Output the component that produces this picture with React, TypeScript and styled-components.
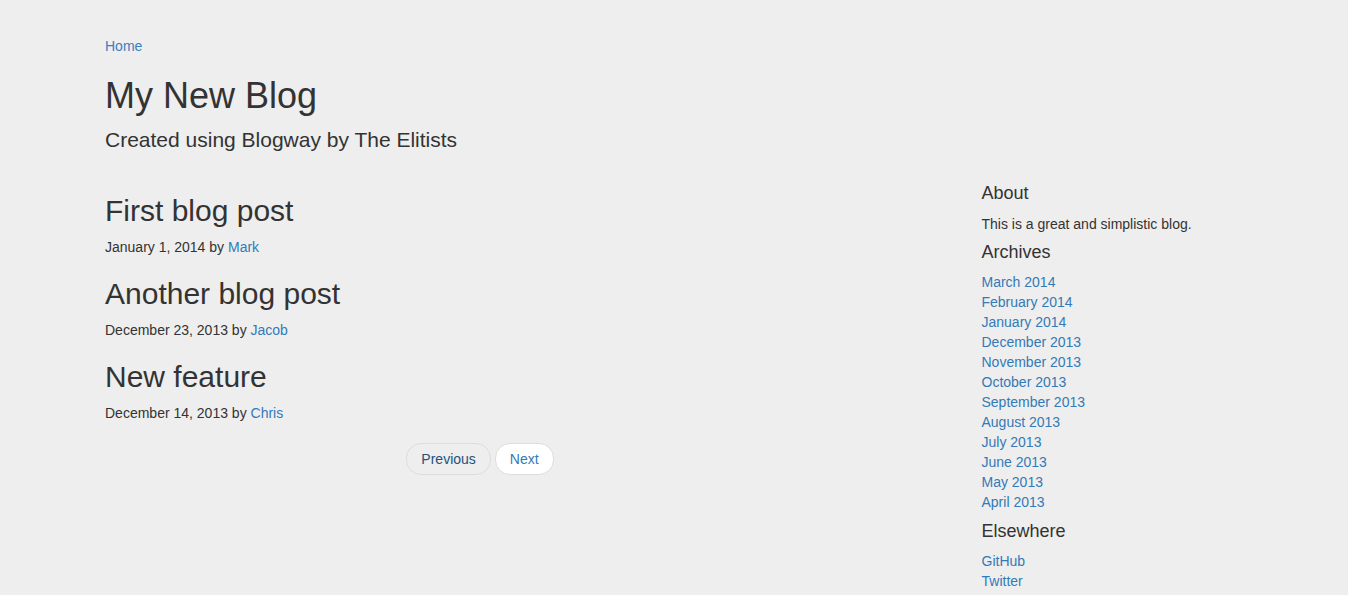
import React from "react";
import styled, { createGlobalStyle } from "styled-components";

const Global = createGlobalStyle`
  html, body { margin: 0; padding: 0; }
  body {
    background: #eeeeee;
    font-family: "Liberation Sans", Arial, Helvetica, sans-serif;
    font-size: 14px;
    line-height: 1.428571;
    color: #333333;
  }
  * { box-sizing: border-box; }
`;

const Container = styled.div`
  width: 1170px;
  margin: 0 auto;
  padding: 0 15px 0 16px;
`;

const Header = styled.header`
  padding-top: 36px;
  padding-bottom: 9px;
`;

const Crumb = styled.a`
  display: block;
  color: #3a80bf;
  text-decoration: none;
  line-height: 20px;
`;

const Title = styled.h1`
  font-size: 36px;
  font-weight: 500;
  line-height: 1.1;
  margin: 20px 0 9px;
`;

const Subtitle = styled.p`
  font-size: 21px;
  line-height: 30px;
  margin: 0 0 10px;
`;

const Row = styled.div`
  display: flex;
  margin: 0 -15px;
`;

const Main = styled.main`
  width: 780px;
  padding: 0 15px;
`;

const Sidebar = styled.aside`
  width: 292.5px;
  margin-left: 96.5px;
  padding: 0 15px;
`;

const PostTitle = styled.h2`
  font-size: 30px;
  font-weight: 500;
  line-height: 1.1;
  margin: 20px 0 10px;
`;

const Meta = styled.p`
  margin: 0 0 10px;
  line-height: 20px;
`;

const Link = styled.a`
  color: #337ab7;
  text-decoration: none;
`;

const Pager = styled.ul`
  list-style: none;
  padding: 0;
  margin: 20px 0;
  display: flex;
  justify-content: center;
  gap: 4px;
`;

const PagerLink = styled.a<{ $hover?: boolean }>`
  display: inline-block;
  padding: 5px 14px;
  line-height: 20px;
  border: 1px solid #dddddd;
  border-radius: 15px;
  text-decoration: none;
  background: ${(p) => (p.$hover ? "#eeeeee" : "#ffffff")};
  color: ${(p) => (p.$hover ? "#23527c" : "#337ab7")};
`;

const SideHeading = styled.h4<{ $mt?: number; $mb?: number }>`
  font-size: 18px;
  font-weight: 500;
  line-height: 1.1;
  margin: ${(p) => p.$mt ?? 10}px 0 ${(p) => p.$mb ?? 10}px;
`;

const SideText = styled.p`
  margin: 0 0 6px;
  line-height: 20px;
`;

const List = styled.ol`
  list-style: none;
  padding: 0;
  margin: 0 0 10px;
  li { line-height: 20px; }
`;

const posts = [
  { title: "First blog post", date: "January 1, 2014", author: "Mark" },
  { title: "Another blog post", date: "December 23, 2013", author: "Jacob" },
  { title: "New feature", date: "December 14, 2013", author: "Chris" },
];

const archives = [
  "March 2014",
  "February 2014",
  "January 2014",
  "December 2013",
  "November 2013",
  "October 2013",
  "September 2013",
  "August 2013",
  "July 2013",
  "June 2013",
  "May 2013",
  "April 2013",
];

export default function App() {
  return (
    <>
      <Global />
      <Container>
        <Header>
          <Crumb href="#">Home</Crumb>
          <Title>My New Blog</Title>
          <Subtitle>Created using Blogway by The Elitists</Subtitle>
        </Header>
        <Row>
          <Main>
            {posts.map((p) => (
              <article key={p.title}>
                <PostTitle>{p.title}</PostTitle>
                <Meta>
                  {p.date} by <Link href="#">{p.author}</Link>
                </Meta>
              </article>
            ))}
            <Pager>
              <li>
                <PagerLink href="#" $hover>
                  Previous
                </PagerLink>
              </li>
              <li>
                <PagerLink href="#">Next</PagerLink>
              </li>
            </Pager>
          </Main>
          <Sidebar>
            <SideHeading $mb={11}>About</SideHeading>
            <SideText>This is a great and simplistic blog.</SideText>
            <SideHeading $mt={9} $mb={9}>
              Archives
            </SideHeading>
            <List>
              {archives.map((a) => (
                <li key={a}>
                  <Link href="#">{a}</Link>
                </li>
              ))}
            </List>
            <SideHeading $mb={9}>Elsewhere</SideHeading>
            <List>
              <li>
                <Link href="#">GitHub</Link>
              </li>
              <li>
                <Link href="#">Twitter</Link>
              </li>
            </List>
          </Sidebar>
        </Row>
      </Container>
    </>
  );
}
